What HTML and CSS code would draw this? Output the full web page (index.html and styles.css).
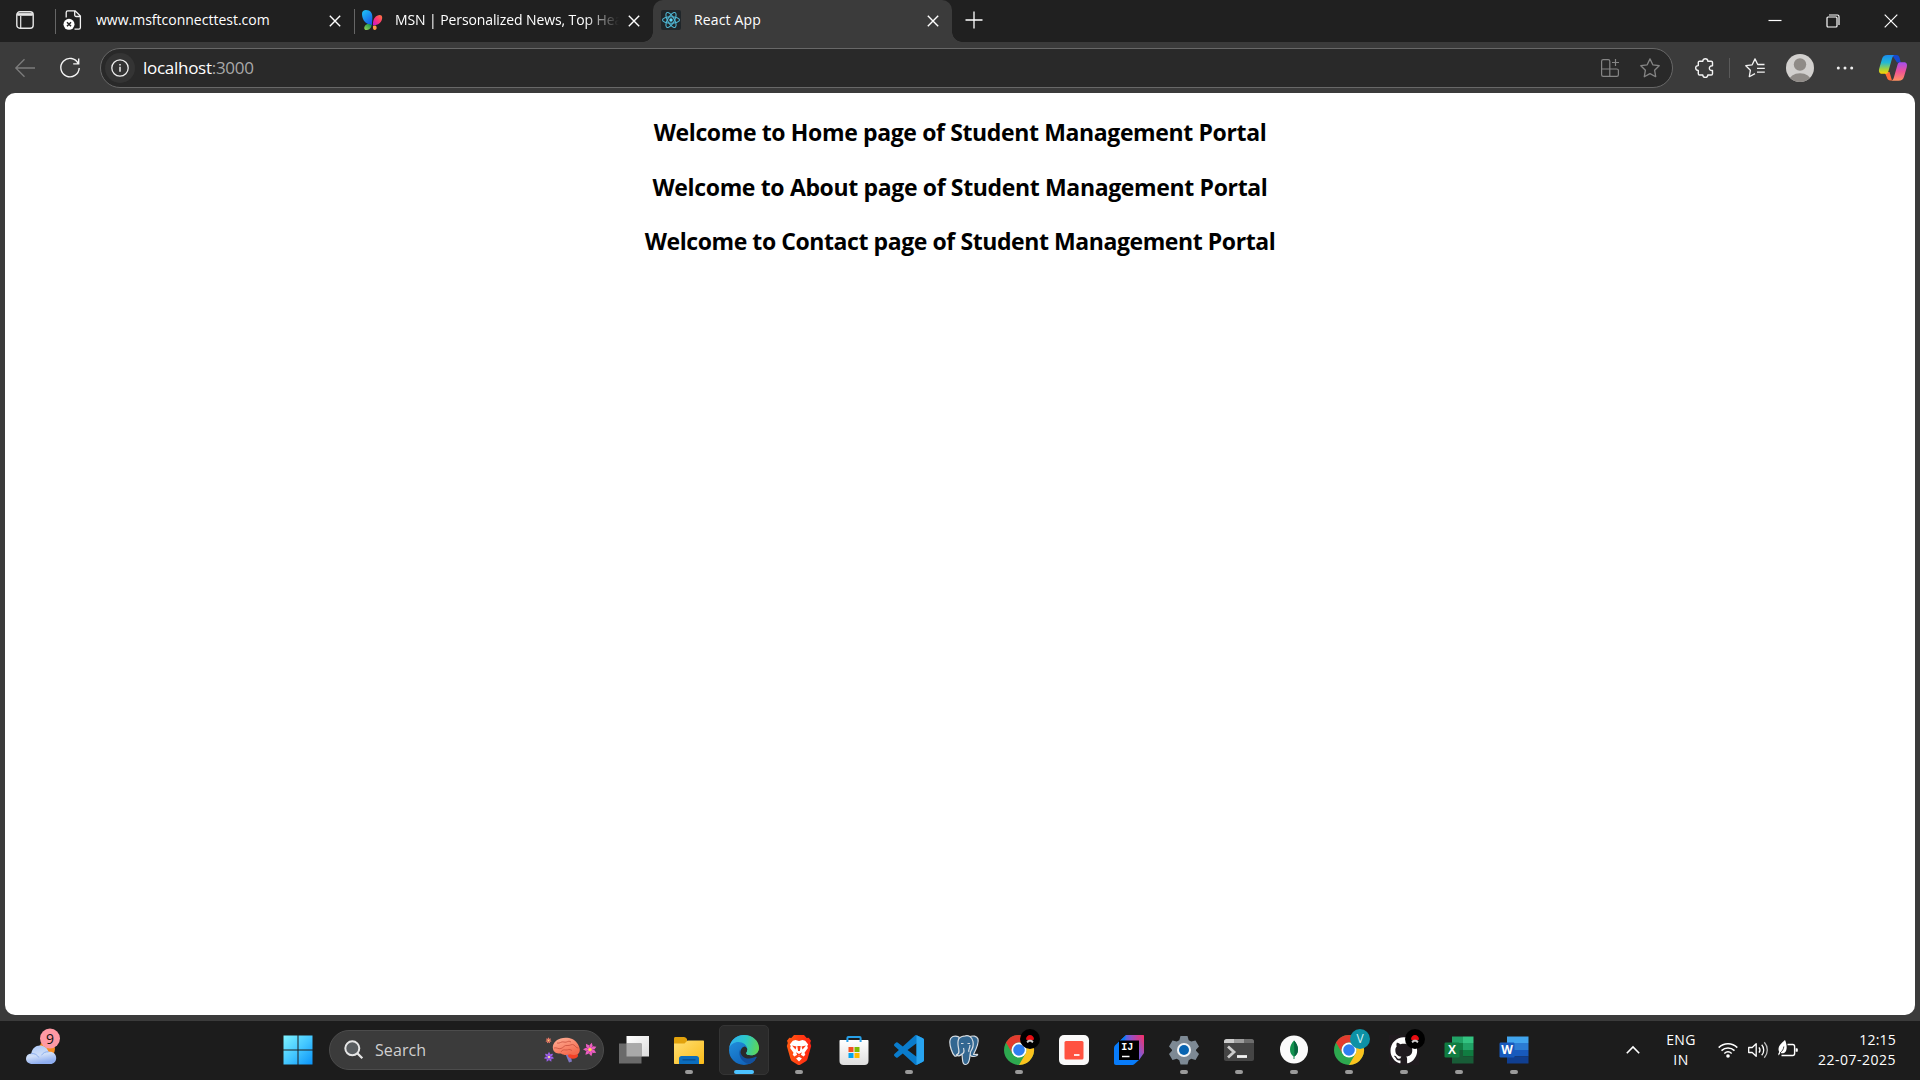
FILE: index.html
```
<!DOCTYPE html>
<html lang="en">
<head>
<meta charset="utf-8">
<title>React App</title>
<link rel="stylesheet" href="styles.css">
</head>
<body>
<div class="browser">
  <header class="tabstrip">
    <div class="tab-actions">
      <svg class="i18" viewBox="0 0 18 18" fill="none" stroke="#e6e6e6" stroke-width="1.4"><rect x=".8" y=".8" width="16.4" height="16.4" rx="3"/><path d="M1 3.2h16M4.7 5v12" stroke-width="1.2"/><path d="M1.3 2.2h15.4v2.6H1.3z" fill="#e6e6e6" stroke="none"/></svg>
    </div>
    <div class="tab">
      <svg class="favicon" viewBox="0 0 20 20" fill="none" stroke="#f2f2f2" stroke-width="1.3"><path d="M3.2 7.5V2.4C3.2 1.5 3.900.8 4.800.8h7.400l5.200 5.200v11.500c0 .9-.7 1.600-1.600 1.600h-4.300M11.700 1v4c0 .9.600 1.500 1.500 1.500h4"/><circle cx="6" cy="14.300" r="5.500" fill="#fff" stroke="none"/><path d="M4 12.300l4 4m0-4l-4 4" stroke="#222" stroke-width="1.500"/></svg>
      <span class="tab-title t-msft">www.msftconnecttest.com</span>
      <svg class="close" viewBox="0 0 12 12"><path d="M.8.8l10.400 10.400m0-10.400L.8 11.200"/></svg>
    </div>
    <div class="tab">
      <svg class="favicon" viewBox="0 0 20 20">
        <defs>
          <linearGradient id="msnBlue" x1="0" y1="0" x2=".6" y2="1"><stop stop-color="#20c8f5"/><stop offset="1" stop-color="#1560e8"/></linearGradient>
          <linearGradient id="msnPink" x1="1" y1="0" x2="0" y2="1"><stop stop-color="#ff7a3c"/><stop offset=".5" stop-color="#fb3475"/><stop offset="1" stop-color="#c312d8"/></linearGradient>
          <linearGradient id="msnGreen" x1="0" y1="1" x2="1" y2="0"><stop stop-color="#9bd85a"/><stop offset="1" stop-color="#078a4d"/></linearGradient>
        </defs>
        <path d="M9.800 15C2 14 0 8 0 4 0 1 1.700 0 4 0c4.500 0 6.800 3 6.300 9z" fill="url(#msnBlue)"/>
        <path d="M11 15.500c-.5-7 3-10.500 6.800-10.500 2.800 0 3 3.500 1.400 6.200-1.500 2.400-4 4-8.200 4.300z" fill="url(#msnPink)"/>
        <path d="M9.700 15C9 19 6.500 20 4.200 20c-2.400 0-2.300-2.700-1.200-4.300 1.400-2 4-2 6.700-.7z" fill="url(#msnGreen)"/>
        <path d="M11 16c1.300-.6 2.900-.8 3.400.4.600 1.400.2 3.200-1.400 3.500-1.600.2-2.300-1.200-2-3.900z" fill="#ff9a42"/>
      </svg>
      <span class="tab-title t-msn">MSN | Personalized News, Top Hea</span>
      <svg class="close" viewBox="0 0 12 12"><path d="M.8.8l10.400 10.400m0-10.400L.8 11.200"/></svg>
    </div>
    <div class="tab active">
      <svg class="favicon" viewBox="0 0 20 20"><rect width="20" height="20" rx="2" fill="#20262a"/><g fill="none" stroke="#4fb8d6" stroke-width="1.100"><ellipse cx="10" cy="10" rx="8.500" ry="3.300"/><ellipse cx="10" cy="10" rx="8.500" ry="3.300" transform="rotate(60 10 10)"/><ellipse cx="10" cy="10" rx="8.500" ry="3.300" transform="rotate(120 10 10)"/></g><circle cx="10" cy="10" r="1.700" fill="#61dafb"/></svg>
      <span class="tab-title t-react">React App</span>
      <svg class="close" viewBox="0 0 12 12"><path d="M.8.8l10.400 10.400m0-10.400L.8 11.200"/></svg>
    </div>
    <svg class="new-tab" viewBox="0 0 18 18"><path d="M9 .5v17M.5 9h17" stroke="#fff" stroke-width="1.300"/></svg>
    <div class="window-controls">
      <svg viewBox="0 0 14 14"><path d="M.5 6.500h13"/></svg>
      <svg viewBox="0 0 14 14"><rect x="1" y="3" width="10" height="10" rx="1"/><path d="M3 1h8.500C12.500 1 13 1.600 13 2.500V11"/></svg>
      <svg viewBox="0 0 14 14"><path d="M.7.700l12.600 12.600m0-12.600L.7 13.300"/></svg>
    </div>
  </header>

  <div class="toolbar">
    <svg class="i20 back" viewBox="0 0 20 20"><path d="M20 10H1M9.500 1.200L.8 10l8.700 8.800" fill="none" stroke="#7c7c7c" stroke-width="1.300"/></svg>
    <svg class="i20 reload" viewBox="0 0 20 20"><path d="M18.300 5.600A9.200 9.200 0 1 0 19.200 10M18.700.500v5.400h-5.500" fill="none" stroke="#f4f4f4" stroke-width="1.400"/></svg>
    <div class="address">
      <span class="site-info"><svg class="i18" viewBox="0 0 18 18"><circle cx="9" cy="9" r="8.200" fill="none" stroke="#eee" stroke-width="1.300"/><path d="M9 7.800v5M9 5v1.500" stroke="#eee" stroke-width="1.500"/></svg></span>
      <span class="url">localhost<span class="port">:3000</span></span>
      <svg class="i18 apps" viewBox="0 0 18 18" fill="none" stroke="#858585" stroke-width="1.200"><path d="M8.800 17.400H2.200A1.600 1.600 0 0 1 .6 15.800V2.200C.6 1.300 1.300.6 2.200.6h5c.9 0 1.600.7 1.600 1.600v15.200h7c.9 0 1.600-.7 1.600-1.600v-4.200c0-.9-.7-1.600-1.600-1.600H.6M14.500 0v7M11 3.500h7"/></svg>
      <svg class="i20" viewBox="0 0 20 20" fill="none" stroke="#858585" stroke-width="1.300" stroke-linejoin="round"><path d="M10 .9l2.800 5.900 6.400.9-4.600 4.500 1.100 6.500-5.700-3.100-5.700 3.100 1.100-6.500L.8 7.700l6.400-.9z"/></svg>
    </div>
    <svg class="i20 puzzle" viewBox="0 0 20 20" fill="none" stroke="#f2f2f2" stroke-width="1.400" stroke-linejoin="round"><path d="M3.300 6V4.500c0-.8.500-1.300 1.300-1.300h3.200c0-3.300 5-3.300 5 0h3.400c.8 0 1.300.5 1.300 1.300v3.300c-4.200-.5-4.200 5.300 0 4.700v3.200c0 .8-.5 1.300-1.300 1.300h-3.400c0 3.200-5 3.200-5 0H4.600c-.8 0-1.300-.5-1.300-1.300v-3.300C-.2 12.400-.2 7.600 3.300 7.600z"/></svg>
    <span class="divider"></span>
    <svg class="i20 favs" viewBox="0 0 20 20" fill="none" stroke="#f2f2f2" stroke-width="1.300" stroke-linejoin="round"><path d="M19.500 6.500h-6.800L10 .9 7.200 6.800l-6.400.9 4.600 4.500-1.100 6.500 5.700-3.100M12 10.300h7.800M12 14.200h7.800"/></svg>
    <svg class="avatar" viewBox="0 0 28 28"><defs><clipPath id="av"><circle cx="14" cy="14" r="14"/></clipPath></defs><g clip-path="url(#av)"><path d="M0 0h28v28H0z" fill="#d2d0ce"/><circle cx="14" cy="10.500" r="6.200" fill="#8f8b87"/><ellipse cx="14" cy="27" rx="11" ry="7.800" fill="#8f8b87"/></g></svg>
    <svg class="dots" viewBox="0 0 18 4" fill="#eee"><circle cx="2.300" cy="2" r="1.500"/><circle cx="9" cy="2" r="1.500"/><circle cx="15.700" cy="2" r="1.500"/></svg>
    <svg class="copilot" viewBox="0 0 28 26">
      <defs>
        <linearGradient id="cpA" x1="0" y1="0" x2="0" y2="1"><stop stop-color="#1b8cf0"/><stop offset=".4" stop-color="#22b8d5"/><stop offset=".75" stop-color="#a4d23c"/><stop offset="1" stop-color="#ffd200"/></linearGradient>
        <linearGradient id="cpB" x1="0" y1="0" x2="0" y2="1"><stop stop-color="#a34ef0"/><stop offset=".5" stop-color="#ef5297"/><stop offset="1" stop-color="#ff9161"/></linearGradient>
      </defs>
      <path d="M13 0h4.200c2 0 2.900 1.300 3.400 3l1.200 4.500H18z" fill="#1749cf"/>
      <path d="M5.500 17h5l2.500 8.500h-1.500c-2.300 0-3.200-1.500-3.800-3.600z" fill="#ff6a38"/>
      <path d="M8.500 0h7c-1.500.5-2 2-2.500 3.600L9.500 16c-.6 2-1.500 2.800-3.500 2.800H3c-3 0-3.500-2.800-2.700-5.600L3 4C3.800 1.400 5.300 0 8.500 0z" fill="url(#cpA)"/>
      <path d="M19.500 25.700h-7c1.500-.5 2-2 2.500-3.600l3.500-12.300C19 7.800 20 7.300 22 7.300h3c3 0 3.400 2.500 2.700 5.200L25 21.700c-.8 2.600-2.300 4-5.500 4z" fill="url(#cpB)"/>
    </svg>
  </div>

  <main class="page">
    <h2 class="h-home">Welcome to Home page of Student Management Portal</h2>
    <h2 class="h-about">Welcome to About page of Student Management Portal</h2>
    <h2 class="h-contact">Welcome to Contact page of Student Management Portal</h2>
  </main>
</div>

<footer class="taskbar">
  <div class="weather">
    <svg viewBox="0 0 36 38">
      <defs><linearGradient id="cloud" x1="0" y1="0" x2=".3" y2="1"><stop stop-color="#a9c6f7"/><stop offset=".6" stop-color="#cfdef8"/><stop offset="1" stop-color="#8faef0"/></linearGradient></defs>
      <circle cx="21" cy="21" r="8" fill="#f58a1f"/>
      <path d="M6.500 36C2.500 36 0 33.500 0 30.700c0-2.900 2-5 5.300-5.200C6 20.500 9.500 17.500 14 17.500c4 0 7.300 2.400 8.500 6.300 4.500-.6 7.700 2 7.700 6.200 0 3.600-2.400 6-6 6z" fill="url(#cloud)"/>
      <path d="M5.300 25.500c3.500-.2 6 1.300 7.500 4M22.500 23.800c-3-.3-5.500 1-7 3.500" fill="none" stroke="#8eb0ee" stroke-width="1"/>
      <circle cx="24" cy="10.500" r="10" fill="#ff99a4"/>
      <text x="24" y="16" text-anchor="middle" class="badge-number">9</text>
    </svg>
  </div>

  <nav class="apps-row">
    <div class="slot start"><svg viewBox="0 0 30 30"><defs><linearGradient id="win" x1="0" y1="0" x2="1" y2="1"><stop stop-color="#7ff3ff"/><stop offset=".5" stop-color="#45c8ff"/><stop offset="1" stop-color="#0a93f8"/></linearGradient></defs><path d="M.5.500h14v14H.5zM15.500.500h14v14h-14zM.5 15.500h14v14H.5zM15.500 15.500h14v14h-14z" fill="url(#win)"/></svg></div>

    <div class="search">
      <svg class="magnifier" viewBox="0 0 20 20" fill="none" stroke="#e6e6e6" stroke-width="2"><circle cx="8.300" cy="8.300" r="7" fill="#595d60"/><path d="M13.300 13.300l5 5" stroke-width="2.300"/></svg>
      <span class="search-label">Search</span>
      <svg class="brain" viewBox="0 0 54 26">
        <defs>
          <linearGradient id="br" x1="0" y1="0" x2=".6" y2="1"><stop stop-color="#ffb199"/><stop offset="1" stop-color="#f46a4d"/></linearGradient>
          <g id="flower"><path d="M0 0L-1.700-4 0-7 1.700-4z"/><path d="M0 0L-1.700-4 0-7 1.700-4z" transform="rotate(51)"/><path d="M0 0L-1.700-4 0-7 1.700-4z" transform="rotate(103)"/><path d="M0 0L-1.700-4 0-7 1.700-4z" transform="rotate(154)"/><path d="M0 0L-1.700-4 0-7 1.700-4z" transform="rotate(206)"/><path d="M0 0L-1.700-4 0-7 1.700-4z" transform="rotate(257)"/><path d="M0 0L-1.700-4 0-7 1.700-4z" transform="rotate(309)"/><circle r="2.500"/></g>
        </defs>
        <path d="M21 16h5l2 8.500-3 1z" fill="#8177c2"/>
        <ellipse cx="29" cy="18.500" rx="5" ry="3.300" fill="#f34226"/>
        <path d="M9 12c-1-5 2.500-9 7.500-10.500C23-.3 30 1.500 33 6c2.600 3.500 4 8 1.500 10.500-2 2-6 1.500-8.500.8-3 1.200-7 .8-9-.8-3.500.5-7.500-1-8-4.500z" fill="url(#br)"/>
        <path d="M10 11c3-1 4 1.500 7 .5s3-3.500 6-3 5-2 7-.5 2 3 4.500 3M13 6c3 1 4-2 7-1s4-2 7 0M17 15c1-2.500 3-2.200 5-2s3-1.500 6 .5" fill="none" stroke="#c9513f" stroke-width=".8"/>
        <use href="#flower" transform="translate(5 20) scale(.75)" fill="#9a5ee6"/><circle cx="5" cy="20" r="1" fill="#fff08a"/>
        <use href="#flower" transform="translate(4.500 3.500) scale(.45)" fill="#ef7c68"/><circle cx="4.500" cy="3.500" r=".7" fill="#ffd36b"/>
        <use href="#flower" transform="translate(46 12.500) rotate(15)" fill="#ec5cc0"/><circle cx="46" cy="12.500" r="1.600" fill="#ffe23c"/>
      </svg>
    </div>

    <div class="slot"><svg viewBox="0 0 30 30"><defs><linearGradient id="tv" x1="0" y1="0" x2="1" y2="1"><stop stop-color="#fff"/><stop offset="1" stop-color="#dcdcdc"/></linearGradient></defs><path d="M7.500 1H30v20.500H7.500z" fill="url(#tv)"/><path d="M0 8.500h22.500V28.500H0z" fill="#6a6a6a"/><path d="M7.500 8.500h15v13h-15z" fill="#a9a9a9"/></svg></div>

    <div class="slot running"><svg viewBox="0 0 30 30"><defs><linearGradient id="fold" x1="0" y1="0" x2="1" y2="1"><stop stop-color="#ffdf73"/><stop offset="1" stop-color="#fbbb18"/></linearGradient></defs><path d="M0 3.500C0 2.500.6 2 1.500 2H10c1 0 2 .7 3 2v5H0z" fill="#e2a20c"/><path d="M0 8.500 10.500 8.500 13.500 5.500H29c.6 0 1 .4 1 1V28c0 .6-.4 1-1 1H1c-.6 0-1-.4-1-1z" fill="url(#fold)"/><path d="M5 29v-5.500C5 22 6 21 7.500 21h15c1.500 0 2.500 1 2.500 2.500V29z" fill="#0b6dbd"/><path d="M8.500 24.800h13" stroke="#084f91" stroke-width="1.400"/></svg></div>

    <div class="slot current"><svg viewBox="0 0 30 30"><defs><linearGradient id="edT" gradientUnits="userSpaceOnUse" x1="0" y1="8" x2="30" y2="15"><stop stop-color="#2fb0f2"/><stop offset=".5" stop-color="#2cc8c8"/><stop offset="1" stop-color="#62d84e"/></linearGradient><linearGradient id="edL" x1="0" y1="0" x2=".6" y2="1"><stop stop-color="#2496e2"/><stop offset="1" stop-color="#1062b8"/></linearGradient></defs><path d="M15 0a15 15 0 1 0 0 30A15 15 0 0 0 15 0z" fill="url(#edL)"/><path d="M.2 13C1.500 5 7.500 0 15 0c9 0 15 6.200 15 12.500 0 5-3.600 7.800-8 7.800-3.200 0-4.800-1-4.800-2 0-.8 1.100-1.300 1.100-3.600C18.300 10 14 7 9.500 7 5 7 1.500 9.500.2 13z" fill="url(#edT)"/><path d="M11 14.500c-2.400 6.500 2.500 13.800 9.500 14.500 3-1.300 5.500-3.500 7-6.300.4-.8-.2-1.200-.9-.9C20.500 24.500 12.500 22.500 11 14.500z" fill="#12509d"/><path d="M30 12.500c0 5-3.600 7.800-8 7.800-3.200 0-4.800-1-4.800-2 0-.8 1.100-1.300 1.100-3.600 0-1.200-.8-2.400-2.300-3.200-3 .2-5 3.500-4.200 6.700 1.100 4.500 7.500 7.300 14.800 3.600.7-.3 1.300.1.900.9L26 25.300 31 24V12z" fill="#2a2a2a"/><path d="M30 12.500c0 5-3.600 7.800-8 7.800-3.200 0-4.800-1-4.800-2 0-.8 1.100-1.300 1.100-3.600l8-4z" fill="url(#edT)"/></svg></div>

    <div class="slot running"><svg viewBox="0 0 30 30"><defs><linearGradient id="brave"><stop stop-color="#ff5a12"/><stop offset="1" stop-color="#ff2313"/></linearGradient></defs><path d="M10 0h10l2.700 3 2-.3 2.300 3-.8 2.300 1 3L23.500 24c-.4 1.300-1 1.800-2 2.500L15.800 30h-1.600l-5.700-3.500c-1-.7-1.600-1.200-2-2.500L2.800 11l1-3L3 5.700l2.300-3 2 .3z" fill="url(#brave)"/><path d="M15 6l3.500-1 2.700.7 3 3.700-1 1.600.7 2-3.400 4.700.8 2-1.700 1.800-2.800-1.800-1.800.9v1.200l2.900 1.800L15 26.500l-2.900-2.900 2.900-1.800v-1.200l-1.800-.9-2.800 1.800-1.700-1.800.8-2L6.100 13l.7-2-1-1.600 3-3.700 2.700-.7z" fill="#fff"/><path d="M8 10.500l4.500 1-1 3zM22 10.500l-4.500 1 1 3zM13.300 11h3.400l-.8 5h-1.800zM12 17.200l3 1.800 3-1.800-1.300 3h-3.400z" fill="#ff3c14"/></svg></div>

    <div class="slot"><svg viewBox="0 0 30 30"><defs><linearGradient id="store" x1="0" y1="0" x2="0" y2="1"><stop stop-color="#fff"/><stop offset="1" stop-color="#dedede"/></linearGradient></defs><path d="M.5 6c0-.6.4-1 1-1h27c.6 0 1 .4 1 1v20c0 2.500-1.500 4-4 4h-21c-2.500 0-4-1.500-4-4z" fill="url(#store)"/><path d="M8.400 7V2.900C8.400 2.300 8.800 2 9.400 2h11.200c.6 0 1 .3 1 .9V7" fill="none" stroke="#27a0e8" stroke-width="2"/><path d="M9.500 12h5v5h-5z" fill="#f25022"/><path d="M15.500 12h5v5h-5z" fill="#7fba00"/><path d="M9.500 18h5v5h-5z" fill="#00a4ef"/><path d="M15.500 18h5v5h-5z" fill="#ffb900"/></svg></div>

    <div class="slot running"><svg viewBox="0 0 24 24"><path d="M23.150 2.587L18.210.210a1.494 1.494 0 0 0-1.705.290l-9.460 8.630-4.120-3.128a.999.999 0 0 0-1.276.057L.327 7.261A1 1 0 0 0 .326 8.740L3.899 12 .326 15.260a1 1 0 0 0 .001 1.479L1.650 17.940a.999.999 0 0 0 1.276.057l4.120-3.128 9.460 8.630a1.492 1.492 0 0 0 1.704.290l4.942-2.377A1.500 1.500 0 0 0 24 20.060V3.939a1.500 1.500 0 0 0-.850-1.352zm-5.146 14.861L10.826 12l7.178-5.448v10.896z" fill="#0a7ccc"/><path d="M18 .1l5.150 2.487A1.500 1.500 0 0 1 24 3.940v16.120a1.500 1.500 0 0 1-.850 1.352L18 23.900z" fill="#28a4f0"/></svg></div>

    <div class="slot"><svg viewBox="0 0 30 30" stroke="#d8dde2" stroke-width="1.200" stroke-linejoin="round" fill="#336791"><path d="M20 2c4-2 8-.8 9 2 1 3.500-1.500 9.500-4.500 15.500l3.800-.2c1 .2-.3 2-3.300 2.200-2 .1-4-.5-4-2z"/><path d="M10 2C6 0 1 1 .8 7c0 4 2.200 11.500 4.700 13.700 1.500 1.300 3-.7 5-3z"/><path d="M15 1.200c4.500-1.500 8 .3 9 5.300.7 4-.3 7-2 9.500-1.300 2-.7 4-1.500 8-.6 3.200-1.300 5.500-4 5.500-2.400 0-2.800-2-3-5l-.5-5.500c-1.800 2-4 2.500-5.500.8 2-.5 2.700-1.500 2.400-4C9.500 12 8 8 9.500 4.500 10.500 2.300 12.500 1.500 15 1.200z"/><path d="M12 8.500h2.500M18.500 8.500H21M13 19c3-1 2-4 1.500-6M20 17c-1.300-2 1-3 1-7" fill="none"/></svg></div>

    <div class="slot running"><svg viewBox="0 0 30 30"><g id="chrome"><circle cx="15" cy="15" r="15" fill="#2da94f"/><path d="M15 0a15 15 0 0 1 13 7.500H15A7.500 7.500 0 0 0 8.500 18.700L2 7.500A15 15 0 0 1 15 0z" fill="#e33b2e"/><path d="M28 7.500A15 15 0 0 1 15 30l6.500-11.300A7.500 7.500 0 0 0 15 7.500z" fill="#fcc31e"/><circle cx="15" cy="15" r="7.500" fill="#fff"/><circle cx="15" cy="15" r="5.800" fill="#2f7ff0"/></g><g id="spider"><circle cx="26" cy="4" r="10" fill="#000"/><path d="M22 4.500c0-6 8-6 8 0l-2.500 1h-3z" fill="#e60d12"/><path d="M22.500 6.500c1-2.500 6-2.500 7 0l-1 1.500-2.500-1.500L23.500 8z" fill="#ccc"/></g></svg></div>

    <div class="slot"><svg viewBox="0 0 30 30"><rect width="30" height="30" rx="5" fill="#faf9f9"/><rect x="5.500" y="6" width="19" height="18.500" rx="1.500" fill="#ff5240"/><path d="M15 20h5.500" stroke="#fff" stroke-width="1.700"/></svg></div>

    <div class="slot"><svg viewBox="0 0 30 30"><defs><linearGradient id="ij" x1="0" y1="0" x2="1" y2="0"><stop offset=".2" stop-color="#2d73f5"/><stop offset=".5" stop-color="#9350c8"/><stop offset="1" stop-color="#ff2d63"/></linearGradient><linearGradient id="ijR" x1="1" y1="0" x2=".6" y2="1"><stop stop-color="#ff2d63"/><stop offset="1" stop-color="#7a5cd8"/></linearGradient></defs><path d="M12 0h16.500C29.500 0 30 .5 30 1.500V18L12 12 4 8z" fill="url(#ij)"/><path d="M0 13.500C0 12 .4 11 1.400 10L12 0 8 18l17 7-4.500 4c-.8.700-1.500 1-2.800 1H2c-1.300 0-2-.7-2-2z" fill="#087cfa"/><path d="M25 3L29 .1C29.700.3 30 .8 30 1.500V18l-5 7z" fill="url(#ijR)"/><path d="M5 5.500h20V25H5z" fill="#000"/><text x="7.200" y="15" class="ij-text">IJ</text><path d="M8 21.500h7.500" stroke="#fff" stroke-width="1.500"/></svg></div>

    <div class="slot running"><svg viewBox="0 0 30 30"><path d="M11.500 1h7l1.200 4.200 2.500 1.400L26.500 5.500 30 11.500 27 14.800v.9l3 3.300-3.500 6-4.300-1.200-2.500 1.400L18.500 29.500h-7l-1.200-4.300-2.500-1.400L3.500 25 0 19l3-3.300v-.9L0 11.500l3.500-6 4.300 1.100 2.500-1.400z" fill="#7d8994"/><circle cx="15" cy="15" r="7" fill="#f3f6f8"/><circle cx="15" cy="15" r="5" fill="#0864b1"/></svg></div>

    <div class="slot running"><svg viewBox="0 0 30 30"><path d="M0 6.500C0 5 1 4 2.500 4h25C29 4 30 5 30 6.500V24c0 1.200-.8 2-2 2H2c-1.200 0-2-.8-2-2z" fill="#454545"/><path d="M0 8V6.500C0 5 1 4 2.500 4H10v4z" fill="#ccc"/><path d="M10 4h10v4H10z" fill="#9d9d9d"/><path d="M20 4h7.500C29 4 30 5 30 6.500V8H20z" fill="#6d6d6d"/><path d="M4 11.500l6 5.500-6 5.500" fill="none" stroke="#ccc" stroke-width="2.800"/><path d="M13 21.500h10" stroke="#f3f3f3" stroke-width="2.800"/></svg></div>

    <div class="slot running"><svg viewBox="0 0 30 30"><circle cx="15" cy="14.500" r="14" fill="#fafafa"/><path d="M15 5.500c2.500 2.700 4 5.500 4 9 0 3.700-1.500 5.500-3.500 7v2.500h-1v-2.500c-2-1.500-3.500-3.300-3.500-7 0-3.500 1.500-6.300 4-9z" fill="#12924f"/><path d="M15 5.500c2.500 2.700 4 5.500 4 9 0 3.700-1.500 5.500-3.500 7z" fill="#07643e"/></svg></div>

    <div class="slot running"><svg viewBox="0 0 30 30"><use href="#chrome"/><circle cx="26" cy="4" r="10" fill="#0d91a5"/><text x="26" y="8.300" text-anchor="middle" class="profile-text">V</text></svg></div>

    <div class="slot running"><svg viewBox="0 0 30 30"><path d="M0 0h30v30H0z" fill="#201b1f"/><path d="M12 .297c-6.630 0-12 5.373-12 12 0 5.303 3.438 9.800 8.205 11.385.600.113.820-.258.820-.577 0-.285-.010-1.040-.015-2.040-3.338.724-4.042-1.610-4.042-1.610C4.422 18.070 3.633 17.700 3.633 17.700c-1.087-.744.084-.729.084-.729 1.205.084 1.838 1.236 1.838 1.236 1.070 1.835 2.809 1.305 3.495.998.108-.776.417-1.305.760-1.605-2.665-.300-5.466-1.332-5.466-5.930 0-1.310.465-2.380 1.235-3.220-.135-.303-.540-1.523.105-3.176 0 0 1.005-.322 3.300 1.230.960-.267 1.980-.399 3-.405 1.020.006 2.040.138 3 .405 2.280-1.552 3.285-1.230 3.285-1.230.645 1.653.240 2.873.120 3.176.765.840 1.230 1.910 1.230 3.220 0 4.610-2.805 5.625-5.475 5.920.420.360.810 1.096.810 2.220 0 1.606-.015 2.896-.015 3.286 0 .315.210.690.825.570C20.565 22.092 24 17.592 24 12.297c0-6.627-5.373-12-12-12" fill="#fff" transform="translate(1.500 2) scale(1.110)"/><use href="#spider"/></svg></div>

    <div class="slot running"><svg viewBox="0 0 30 30"><path d="M8 1.500h11V8H8z" fill="#21a366"/><path d="M19 1.500h10.500V8H19z" fill="#33c481"/><path d="M8 8h11v7H8z" fill="#107c41"/><path d="M19 8h10.500v7H19z" fill="#21a366"/><path d="M8 15h11v13.500H8z" fill="#185c37"/><path d="M19 15h10.500v6.500H19z" fill="#107c41"/><path d="M19 21.500h10.500v7H19z" fill="#185c37"/><rect x=".5" y="7.500" width="15" height="15" rx="1.200" fill="#107c41"/><text x="8" y="19.300" text-anchor="middle" class="office-text">X</text></svg></div>

    <div class="slot running"><svg viewBox="0 0 30 30"><path d="M8 1.500h21.500V8H8z" fill="#41a5ee"/><path d="M8 8h21.500v7H8z" fill="#2b7cd3"/><path d="M8 15h21.500v6.500H8z" fill="#185abd"/><path d="M8 21.500h21.500v7H8z" fill="#103f91"/><rect x=".5" y="7.500" width="15" height="15" rx="1.200" fill="#185abd"/><text x="8" y="19.300" text-anchor="middle" class="office-text">W</text></svg></div>
  </nav>

  <div class="tray">
    <svg class="chevron" viewBox="0 0 14 8"><path d="M.8 7.200L7 1l6.200 6.200" fill="none" stroke="#fff" stroke-width="1.600"/></svg>
    <div class="lang"><span>ENG</span><span>IN</span></div>
    <svg class="i20 wifi" viewBox="0 0 20 20" fill="none" stroke="#fff" stroke-width="1.500"><path d="M.7 7.600c5.200-5.200 13.400-5.200 18.600 0M3.500 10.600c3.700-3.600 9.300-3.600 13 0M6.300 13.500c2.200-2 5.200-2 7.400 0"/><circle cx="10" cy="16" r="1.800" fill="#fff" stroke="none"/></svg>
    <svg class="i20 sound" viewBox="0 0 20 20" fill="none" stroke="#fff" stroke-width="1.300" stroke-linejoin="round"><path d="M.7 7.500v5h3.500l4 3.800V3.700l-4 3.800zM11 7.300c1.200 1.600 1.200 3.800 0 5.400M13.700 4.800c2.700 3 2.700 7.400 0 10.400"/><path d="M16.300 2.300c4 4.500 4 10.900 0 15.400" stroke="#bbb"/></svg>
    <svg class="i20 battery" viewBox="0 0 20 20"><path d="M9.500 4.500h5.200c1.100 0 1.900.8 1.900 1.900v7.200c0 1.100-.8 1.900-1.900 1.900H3.500" fill="none" stroke="#fff" stroke-width="1.400"/><path d="M17.600 8.200h1.200c.6 0 1 .3 1 .9v1.800c0 .6-.4.900-1 .9h-1.200z" fill="#fff"/><path d="M7 0c2 4.500 2.300 9 .500 11.800-1.500 2-3.800 1.800-5 1L.7 15.500.2 14l1-2C-.8 7.500 1.500 4.500 7 0z" fill="#fff"/><path d="M5.800 6.500C5.600 9 4.500 11 2 13" stroke="#1c1c1c" stroke-width=".8" fill="none"/></svg>
    <div class="clock"><span>12:15</span><span class="date">22-07-2025</span></div>
  </div>
</footer>
</body>
</html>
```
FILE: styles.css
```
* { box-sizing: border-box; }

body {
  margin: 0;
  width: 1920px;
  height: 1080px;
  overflow: hidden;
  display: flex;
  flex-direction: column;
  background: #3b3b3b;
  font-family: "Open Sans", "Noto Sans", sans-serif;
  color: #fff;
}

svg { display: block; flex: none; overflow: visible; }
span { white-space: nowrap; }
.i18 { width: 18px; height: 18px; }
.i20 { width: 20px; height: 20px; }

.browser {
  height: 1021px;
  display: flex;
  flex-direction: column;
  background: #3b3b3b;
}

/* Tab strip */
.tabstrip {
  height: 42px;
  flex: none;
  display: flex;
  align-items: center;
  background: #202020;
}
.tab-actions { width: 55px; padding-left: 16px; padding-bottom: 2px; }
.tab {
  position: relative;
  width: 299px;
  height: 42px;
  padding: 0 13px 2px 8px;
  display: flex;
  align-items: center;
}
.tab:not(.active)::before {
  content: "";
  position: absolute;
  left: 0;
  top: 9px;
  width: 1px;
  height: 25px;
  background: #666;
}
.tab.active { background: #3b3b3b; border-radius: 10px 10px 0 0; }
.tab.active::before,
.tab.active::after {
  content: "";
  position: absolute;
  bottom: 0;
  width: 10px;
  height: 10px;
}
.tab.active::before { left: -10px; background: radial-gradient(circle at 0 0, #202020 9.5px, #3b3b3b 10px); }
.tab.active::after { right: -10px; background: radial-gradient(circle at 100% 0, #202020 9.5px, #3b3b3b 10px); }
.favicon { width: 20px; height: 20px; margin-right: 13px; }
.tab-title { flex: 1; font-size: 14px; line-height: 20px; }
.t-react { letter-spacing: 0.15px; }
.t-msn {
  letter-spacing: -0.1px;
  -webkit-mask-image: linear-gradient(to right, #000 190px, transparent 224px);
  mask-image: linear-gradient(to right, #000 190px, transparent 224px);
}
.close { width: 12px; height: 12px; margin-top: 1px; stroke: #fff; stroke-width: 1.4; }
.new-tab { width: 18px; height: 18px; margin: -3px 0 0 13px; }
.window-controls { margin-left: auto; padding-right: 22px; display: flex; gap: 44px; }
.window-controls svg { width: 14px; height: 14px; fill: none; stroke: #fff; stroke-width: 1.2; }

/* Toolbar */
.toolbar {
  height: 51px;
  flex: none;
  display: flex;
  align-items: center;
  padding: 0 13px 0 15px;
}
.reload { margin-left: 25px; }
.address {
  width: 1573px;
  height: 40px;
  margin-left: 20px;
  padding: 0 12px 0 4px;
  display: flex;
  align-items: center;
  border: 1px solid #686868;
  border-radius: 20px;
  background: #292929;
}
.site-info {
  width: 30px;
  height: 30px;
  display: flex;
  align-items: center;
  justify-content: center;
  border-radius: 50%;
  background: #343434;
}
.url { flex: 1; margin-left: 8px; font-size: 17px; line-height: 24px; letter-spacing: -0.28px; }
.port { color: #a8a8a8; }
.apps { margin-right: 21px; }
.puzzle { margin-left: 22px; }
.divider { width: 1px; height: 20px; margin-left: 14px; background: #5a5a5a; }
.favs { margin-left: 15px; }
.avatar { width: 28px; height: 28px; margin-left: 21px; }
.dots { width: 18px; height: 4px; margin-left: 22px; }
.copilot { width: 28px; height: 26px; margin-left: auto; }

/* Page */
.page {
  flex: 1;
  margin: 0 5px 6px;
  padding-top: 23px;
  border-radius: 10px;
  background: #fff;
  color: #000;
  text-align: center;
}
.page h2 { margin: 0 0 22.5px; font-size: 23px; line-height: 32px; font-weight: 700; }
.h-home { letter-spacing: -0.37px; }
.h-about { letter-spacing: -0.35px; }
.h-contact { letter-spacing: -0.42px; }

/* Taskbar */
.taskbar {
  height: 59px;
  flex: none;
  display: flex;
  background: #1c1c1c;
}
.weather { width: 272px; padding: 7px 0 0 26px; }
.weather svg { width: 36px; height: 38px; }
.badge-number { font-size: 14px; fill: #111; }
.apps-row { display: flex; align-items: center; gap: 5px; padding-bottom: 1px; }
.slot {
  position: relative;
  width: 50px;
  height: 50px;
  display: flex;
  align-items: center;
  justify-content: center;
}
.slot svg { width: 30px; height: 30px; }
.start { width: 52px; }
.current { background: #2a2a2a; border: 1px solid #343434; border-radius: 5px; }
.running::after,
.current::after {
  content: "";
  position: absolute;
  left: 21px;
  bottom: 1px;
  width: 8px;
  height: 4px;
  border-radius: 2px;
  background: #9a9a9a;
}
.current::after { left: 14px; bottom: 0; width: 20px; background: #4cc2ff; }
.search {
  width: 275px;
  height: 40px;
  padding: 0 5px 0 14px;
  display: flex;
  align-items: center;
  border: 1px solid #4c4c4c;
  border-radius: 20px;
  background: #3b3b3b;
}
.magnifier { width: 20px; height: 20px; }
.search-label { margin-left: 11px; font-size: 16px; letter-spacing: 0.1px; color: #d0d0d0; }
.brain { width: 54px; height: 26px; margin-left: auto; }
.ij-text { font: 700 10px "Liberation Mono", monospace; fill: #fff; }
.profile-text { font-size: 12px; fill: #d5f2f5; }
.office-text { font-size: 12px; font-weight: 700; fill: #fff; }

/* System tray */
.tray {
  margin-left: auto;
  padding: 0 24px 2px 0;
  display: flex;
  align-items: center;
  font-size: 14px;
  line-height: 20px;
}
.chevron { width: 14px; height: 8px; }
.lang { width: 30px; margin-left: 26px; display: flex; flex-direction: column; align-items: center; letter-spacing: 0.4px; }
.wifi { margin-left: 22px; }
.sound { margin-left: 10px; }
.battery { margin-left: 10px; }
.clock { width: 98px; display: flex; flex-direction: column; align-items: flex-end; letter-spacing: 0.2px; }
.date { letter-spacing: 0.5px; }
```
